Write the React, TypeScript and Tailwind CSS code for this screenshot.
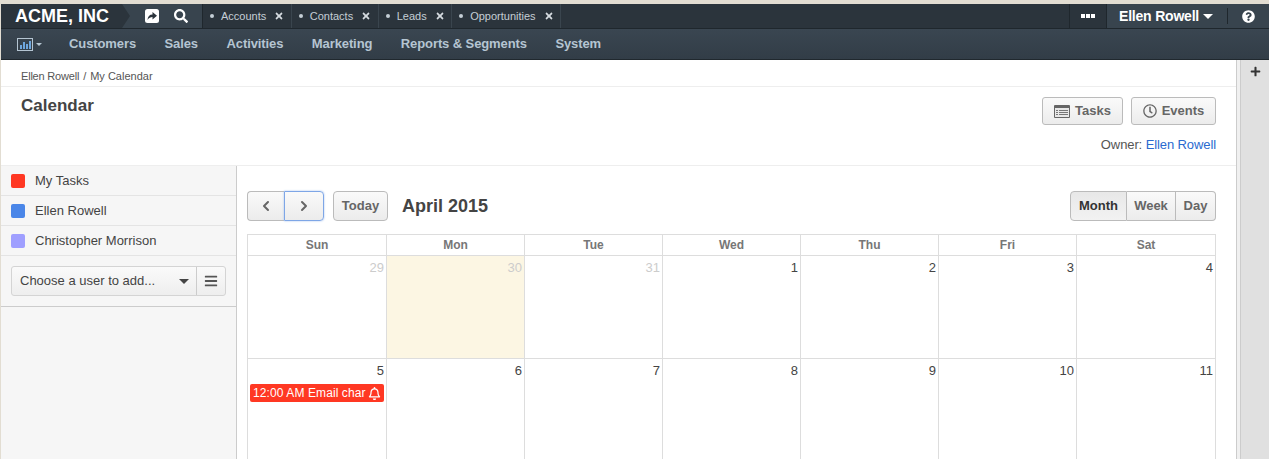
import { ChevronLeft, ChevronRight } from "lucide-react";
import { FaBars, FaPlus, FaQuestionCircle, FaRegBell, FaRegClock, FaSearch, FaTimes } from "react-icons/fa";

const TABS = ["Accounts", "Contacts", "Leads", "Opportunities"];
const NAV = ["Customers", "Sales", "Activities", "Marketing", "Reports & Segments", "System"];
const DAYS = ["Sun", "Mon", "Tue", "Wed", "Thu", "Fri", "Sat"];
const WEEK1 = ["29", "30", "31", "1", "2", "3", "4"];
const WEEK2 = ["5", "6", "7", "8", "9", "10", "11"];
const USERS = [
  { name: "My Tasks", color: "bg-[#ff3823]" },
  { name: "Ellen Rowell", color: "bg-[#4a86e8]" },
  { name: "Christopher Morrison", color: "bg-[#9f9fff]" },
];
const COLS = "grid grid-cols-[139px_138px_138px_138px_138px_138px_139px]";
const BTN = "border border-[#bbb] bg-gradient-to-b from-[#fafafa] to-[#ececec] text-[#666] font-bold";

function TopBar() {
  return (
    <div className="flex h-[25px] bg-[#2b343c] border-b border-[#1f272d] text-white">
      <div className="relative flex w-[121px] items-center pl-[14px] text-[18px] font-bold leading-none">
        ACME, INC
        <div className="absolute right-[-8px] top-0 h-0 w-0 border-y-[12px] border-l-[8px] border-y-transparent border-l-[#2b343c]" />
      </div>
      <div className="flex w-[80px] items-center bg-[#38444e] pl-[23px]">
        <svg width="14" height="14" viewBox="0 0 14 14" className="shrink-0">
          <rect width="14" height="14" rx="2.500" fill="#fff" />
          <path d="M2.500 11c.2-3.500 2-5.500 5-5.500V3l4.500 3.800-4.500 3.700V8c-2 0-3.500.8-5 3z" fill="#2b343c" />
        </svg>
        <FaSearch size={14} className="ml-[15px] shrink-0" />
      </div>
      <div className="flex border-l border-[#1f272d]">
        {TABS.map((t) => (
          <div key={t} className="flex items-center border-r border-[#3a454e] pl-[7px] pr-[6.500px] text-[11px] text-[#c5ced5]">
            <span className="mr-[7px] h-[4px] w-[4px] rounded-full bg-[#c5ced5]" />
            {t}
            <FaTimes size={10} className="ml-[8px] text-[#d5dbe0]" />
          </div>
        ))}
      </div>
      <div className="flex-1" />
      <div className="flex w-[38px] items-center justify-center gap-px border-x border-[#1f272d]">
        <span className="h-[4px] w-[4px] bg-white" />
        <span className="h-[4px] w-[4px] bg-white" />
        <span className="h-[4px] w-[4px] bg-white" />
      </div>
      <div className="flex w-[162px] items-center bg-[#38444e] pl-[12px] text-[14px] font-bold tracking-[-0.2px]">
        Ellen Rowell
        <span className="ml-[4px] h-0 w-0 border-x-[5px] border-t-[5px] border-x-transparent border-t-white" />
        <div className="ml-[14px] h-[16px] w-px bg-[#1f272d]" />
        <FaQuestionCircle size={13} className="ml-[14px]" />
      </div>
    </div>
  );
}

function NavBar() {
  return (
    <div className="flex h-[31px] items-center bg-gradient-to-b from-[#3a4651] to-[#323d47] border-b border-[#20282e] pl-[16px] text-[13px] font-bold tracking-[-0.1px] text-[#b5c5d2]">
      <svg width="16" height="13" viewBox="0 0 16 13" className="shrink-0">
        <rect x="0.500" y="0.500" width="15" height="12" fill="none" stroke="#b5c5d2" />
        <path d="M3 7h2v4H3zM6 4h2v7H6zM9 6h2v5H9zM12 3h2v8h-2z" fill="#6ea6dc" />
      </svg>
      <span className="ml-[3px] mr-[27px] h-0 w-0 border-x-[3px] border-t-[3px] border-x-transparent border-t-[#b5c5d2]" />
      <div className="flex gap-[28.500px]">
        {NAV.map((n) => (
          <span key={n}>{n}</span>
        ))}
      </div>
    </div>
  );
}

function Header() {
  return (
    <div className="bg-white">
      <div className="h-[27px] border-b border-[#eee] pl-[20px] pt-[9px] text-[11px] leading-[15px] text-[#555]">
        <span className="tracking-[-0.2px]">Ellen Rowell</span>
        <span className="mx-[4px]">/</span>My Calendar
      </div>
      <div className="flex h-[79px] justify-between border-b border-[#eee] pl-[20px] pr-[20px]">
        <div className="pt-[9px] text-[17px] font-bold leading-[20px] text-[#444]">Calendar</div>
        <div className="flex flex-col items-end pt-[10px]">
          <div className="flex gap-[8px]">
            <button className={`flex h-[28px] w-[81px] items-center justify-center rounded-[3px] text-[13px] ${BTN}`}>
              <svg width="16" height="13" viewBox="0 0 16 13" className="mr-[5px]">
                <rect width="16" height="13" rx="1" fill="#666" />
                <rect x="1" y="3" width="14" height="9" fill="#e8e8e8" />
                <path d="M2 5h2v1H2zM5 5h9v1H5zM2 7h2v1H2zM5 7h9v1H5zM2 9h2v1H2zM5 9h9v1H5z" fill="#777" />
              </svg>
              Tasks
            </button>
            <button className={`flex h-[28px] w-[85px] items-center justify-center rounded-[3px] text-[13px] ${BTN}`}>
              <FaRegClock size={14} className="mr-[5px]" />
              Events
            </button>
          </div>
          <div className="mt-[12px] text-[13px] leading-[16px] tracking-[-0.1px] text-[#555]">
            Owner: <span className="text-[#2a6ad0]">Ellen Rowell</span>
          </div>
        </div>
      </div>
    </div>
  );
}

function Sidebar() {
  return (
    <div className="w-[236px] shrink-0 border-r border-[#ccc] bg-[#f6f6f6]">
      {USERS.map((u) => (
        <div key={u.name} className="flex h-[30px] items-center border-b border-[#e4e4e4] pl-[10px] text-[13px] text-[#444]">
          <span className={`mr-[10px] h-[14px] w-[14px] rounded-[2px] ${u.color}`} />
          {u.name}
        </div>
      ))}
      <div className="h-[51px] border-b border-[#ccc] pl-[10px] pt-[10px]">
        <div className="flex h-[30px] w-[215px] rounded-[3px] border border-[#d4d4d4] bg-gradient-to-b from-[#fafafa] to-[#eee] text-[13px] text-[#444]">
          <div className="flex flex-1 items-center justify-between pl-[8px] pr-[7px]">
            Choose a user to add...
            <span className="h-0 w-0 border-x-[5px] border-t-[5px] border-x-transparent border-t-[#444]" />
          </div>
          <div className="flex w-[29px] items-center justify-center border-l border-[#ccc]">
            <FaBars size={14} className="text-[#555]" />
          </div>
        </div>
      </div>
    </div>
  );
}

function Toolbar() {
  return (
    <div className="flex h-[30px] items-center">
      <button className={`flex h-[30px] w-[37px] items-center justify-center rounded-l-[4px] border-r-0 ${BTN}`}>
        <ChevronLeft size={16} strokeWidth={3} />
      </button>
      <button className="flex h-[30px] w-[40px] items-center justify-center rounded-r-[4px] border border-[#7ea6e6] bg-gradient-to-b from-[#fafafa] to-[#ececec] text-[#666] shadow-[0_0_2px_#9dbcec]">
        <ChevronRight size={16} strokeWidth={3} />
      </button>
      <button className={`ml-[9px] h-[30px] w-[55px] rounded-[4px] text-[13px] ${BTN}`}>Today</button>
      <div className="ml-[14px] text-[18px] font-bold text-[#444]">April 2015</div>
      <div className="ml-auto flex h-[30px] text-[13px]">
        <button className={`w-[57px] rounded-l-[4px] !text-[#333] !from-[#e8e8e8] !to-[#f2f2f2] ${BTN}`}>Month</button>
        <button className={`w-[49px] border-l-0 ${BTN}`}>Week</button>
        <button className={`w-[40px] rounded-r-[4px] border-l-0 ${BTN}`}>Day</button>
      </div>
    </div>
  );
}

function Calendar() {
  return (
    <div className="min-w-0 flex-1 bg-white pl-[10px] pr-[20px] pt-[25px]">
      <Toolbar />
      <div className={`mt-[13px] ${COLS} border-l border-t border-[#ddd]`}>
        {DAYS.map((d) => (
          <div key={d} className="h-[21px] border-b border-r border-[#ddd] text-center text-[12px] font-bold leading-[20px] text-[#777]">{d}</div>
        ))}
        {WEEK1.map((d, i) => (
          <div
            key={d}
            className={`h-[103px] border-b border-r border-[#ddd] pr-[2px] pt-[4px] text-right text-[13px] leading-[16px] ${i < 3 ? "text-[#ccc]" : "text-[#444]"} ${i === 1 ? "bg-[#fcf6e3]" : ""}`}
          >
            {d}
          </div>
        ))}
        {WEEK2.map((d, i) => (
          <div key={d} className="h-[103px] border-r border-[#ddd] pr-[2px] pt-[4px] text-right text-[13px] leading-[16px] text-[#444]">
            {d}
            {i === 0 && (
              <div className="ml-[2px] mt-[5px] flex h-[18px] items-center rounded-[2px] bg-[#ff3823] pl-[3px] text-[12px] tracking-[0.1px] text-white">
                12:00 AM Email char
                <FaRegBell size={13} className="ml-[2px]" />
              </div>
            )}
          </div>
        ))}
      </div>
    </div>
  );
}

export default function App() {
  return (
    <div className="flex h-[459px] flex-col overflow-hidden bg-[#e2ddd2] pt-[4px] pl-[1px] font-['Liberation_Sans',Arial,sans-serif]">
      <TopBar />
      <NavBar />
      <div className="flex min-h-0 flex-1">
        <div className="min-w-0 flex-1 bg-white">
          <Header />
          <div className="flex h-full bg-white">
            <Sidebar />
            <Calendar />
          </div>
        </div>
        <div className="w-[5px] shrink-0 border-x border-[#ccc] bg-[#f0f0f0]" />
        <div className="flex w-[28px] shrink-0 justify-center bg-[#e0e0e0] pt-[6px]">
          <FaPlus size={11} className="text-[#333]" />
        </div>
      </div>
    </div>
  );
}
